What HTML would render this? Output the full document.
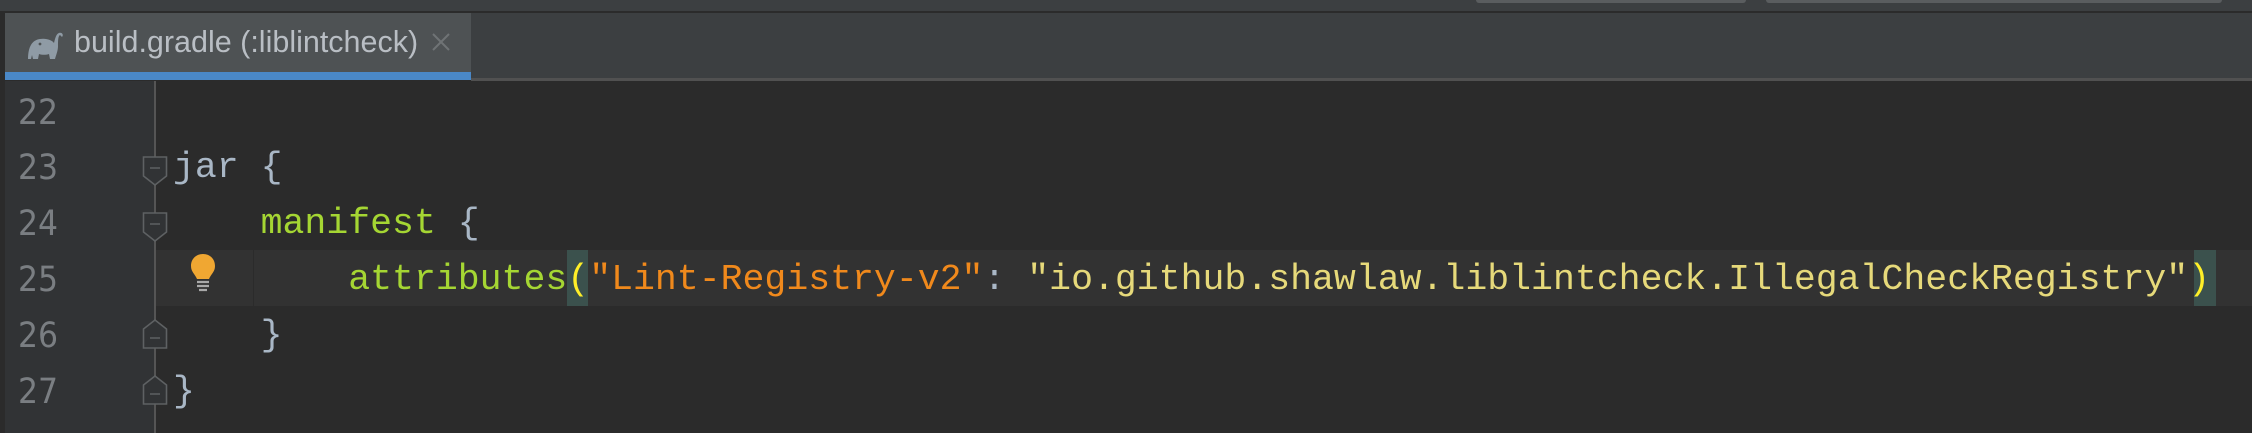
<!DOCTYPE html>
<html><head><meta charset="utf-8"><style>
html,body{margin:0;padding:0}
body{width:2252px;height:433px;background:#2b2b2b;position:relative;overflow:hidden;font-family:"Liberation Sans",sans-serif}
.abs{position:absolute}
.code{position:absolute;left:173px;font-family:"Liberation Mono",monospace;font-size:36.5px;white-space:pre;line-height:56px;height:56px}
.ln{position:absolute;left:18px;width:60px;font-family:"DejaVu Sans Condensed","Liberation Sans",sans-serif;font-size:35px;color:#7a7e82;line-height:56px}
.g{color:#a5d633}.b{color:#a9b7c6}.o{color:#f0891c}.y{color:#e6d97a}
</style></head><body>
<div class="abs" style="left:0;top:0;width:2252px;height:11px;background:#3c3f41"></div>
<div class="abs" style="left:1476px;top:0;width:270px;height:3px;background:#5a5d5f;border-radius:0 0 3px 3px"></div>
<div class="abs" style="left:1766px;top:0;width:456px;height:3px;background:#5a5d5f;border-radius:0 0 3px 3px"></div>
<div class="abs" style="left:0;top:11px;width:2252px;height:2px;background:#2b2b2b"></div>
<div class="abs" style="left:5px;top:13px;width:2247px;height:67px;background:#3c3f41"></div>
<div class="abs" style="left:0;top:11px;width:5px;height:422px;background:#2b2b2b"></div>
<div class="abs" style="left:5px;top:13px;width:466px;height:59px;background:#4e5254"></div>
<div class="abs" style="left:5px;top:72px;width:466px;height:8px;background:#4a88c7"></div>
<div class="abs" style="left:471px;top:78px;width:1781px;height:3px;background:#515151"></div>
<svg class="abs" style="left:26px;top:31px" width="38" height="30" viewBox="0 0 38 30"><path d="M2 28 C2 16 6 9 14 8 C20 7 26 9 28 12 C29 8 30 3 33 2 C36 1 38 4 36 6 L34 4 C32 5 32 10 32 15 C32 20 30 24 29 28 L24 28 L23 23 C20 24 16 24 13 23 L12 28 L7 28 L6 24 L5 28 Z" fill="#8f9ba5"/><circle cx="14" cy="13" r="1.4" fill="#4e5254"/></svg>
<div class="abs" style="left:74px;top:24px;font-size:30.5px;color:#b9bec4;line-height:36px">build.gradle (:liblintcheck)</div>
<svg class="abs" style="left:432px;top:33px" width="18" height="18"><path d="M1 1L17 17M17 1L1 17" stroke="#6f7375" stroke-width="2"/></svg>
<div class="abs" style="left:5px;top:81px;width:149px;height:352px;background:#313335"></div>
<div class="abs" style="left:155px;top:250px;width:2097px;height:56px;background:#323232"></div>
<div class="abs" style="left:253px;top:250px;width:1px;height:56px;background:#2b2b2b"></div>
<div class="abs" style="left:154px;top:81px;width:2px;height:352px;background:#555555"></div>
<div class="ln" style="top:85px">22</div>
<div class="ln" style="top:140px">23</div>
<div class="ln" style="top:196px">24</div>
<div class="ln" style="top:252px">25</div>
<div class="ln" style="top:308px">26</div>
<div class="ln" style="top:364px">27</div>
<svg class="abs" style="left:142px;top:155px" width="26" height="252" viewBox="0 0 26 252">
<g fill="#313335" stroke="#5e6163" stroke-width="1.6">
<path d="M1.5 2H24.5V21L13 30L1.5 21Z"/><path d="M1.5 58H24.5V77L13 86L1.5 77Z"/>
<path d="M1.5 193H24.5V174L13 165L1.5 174Z"/><path d="M1.5 249H24.5V230L13 221L1.5 230Z"/>
</g>
<g stroke="#5e6163" stroke-width="1.6"><path d="M8 13H18M8 69H18M8 183H18M8 239H18"/></g>
</svg>
<svg class="abs" style="left:189px;top:253px" width="28" height="40" viewBox="0 0 28 40"><path d="M14 1C21 1 26 6 26 13C26 19 22 21 20 26H8C6 21 2 19 2 13C2 6 7 1 14 1Z" fill="#f0a732"/><path d="M8 29H20M8 33H20M10 37H18" stroke="#a9a9a9" stroke-width="2.2"/></svg>
<div class="abs" style="left:567px;top:250px;width:21px;height:56px;background:#3b514d"></div>
<div class="abs" style="left:2194px;top:250px;width:22px;height:56px;background:#3b514d"></div>
<div class="code b" style="top:140px">jar {</div>
<div class="code" style="top:196px">    <span class="g">manifest</span><span class="b"> {</span></div>
<div class="code" style="top:252px">        <span class="g">attributes</span><span style="color:#ffef28">(</span><span class="o">"Lint-Registry-v2"</span><span class="b">: </span><span class="y">"io.github.shawlaw.liblintcheck.IllegalCheckRegistry"</span><span style="color:#ffef28">)</span></div>
<div class="code b" style="top:308px">    }</div>
<div class="code b" style="top:364px">}</div>
</body></html>
